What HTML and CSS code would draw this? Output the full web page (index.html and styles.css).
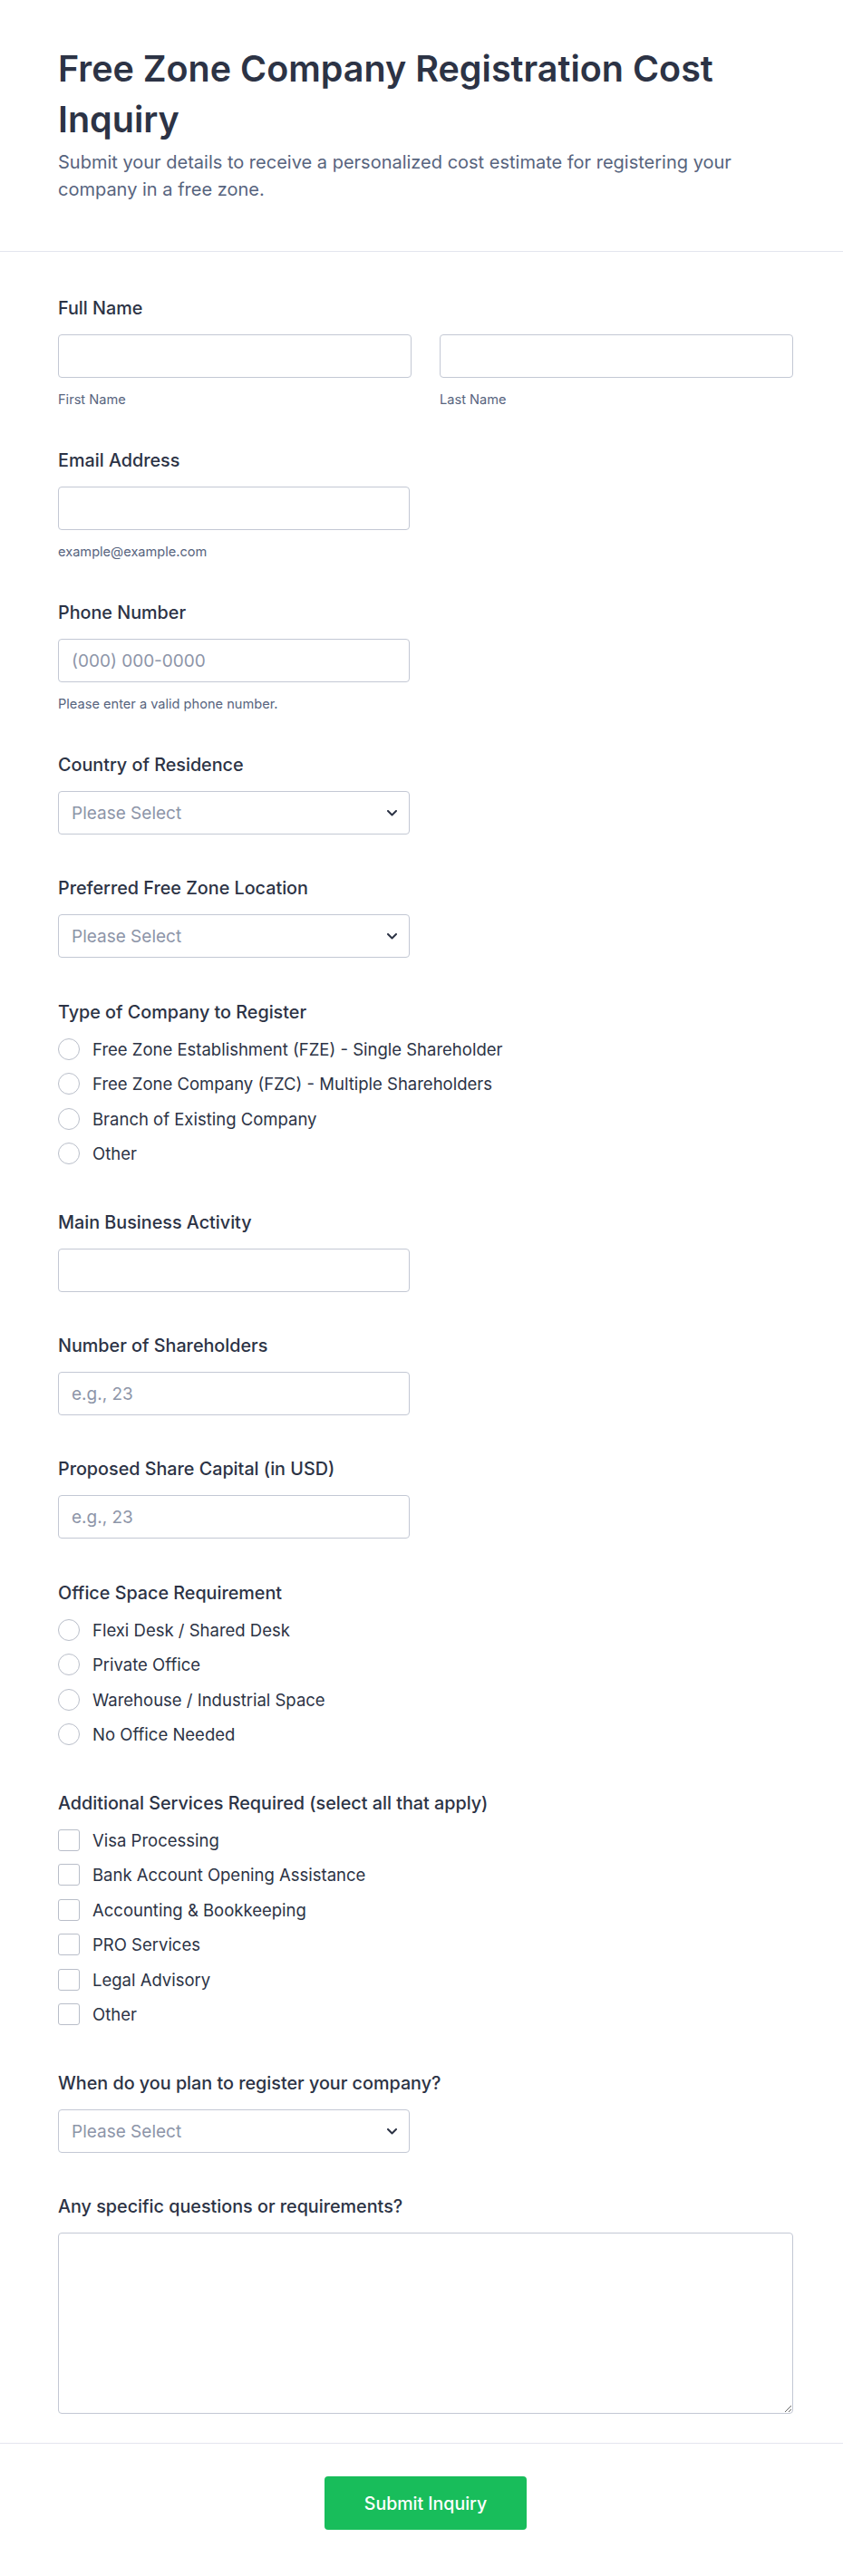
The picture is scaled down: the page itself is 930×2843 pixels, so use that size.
FILE: index.html
```html
<!DOCTYPE html>
<html lang="en">
<head>
<meta charset="utf-8">
<title>Free Zone Company Registration Cost Inquiry</title>
<link rel="stylesheet" href="styles.css">
</head>
<body>
<div class="page">
  <header class="header">
    <h1 class="title">Free Zone Company Registration Cost Inquiry</h1>
    <p class="subtitle">Submit your details to receive a personalized cost estimate for registering your company in a free zone.</p>
  </header>

  <form class="form-body">
    <div class="field">
      <div class="label">Full Name</div>
      <div class="name-row">
        <div class="name-col">
          <input class="input input-full" type="text">
          <div class="sub">First Name</div>
        </div>
        <div class="name-col">
          <input class="input input-full" type="text">
          <div class="sub">Last Name</div>
        </div>
      </div>
    </div>

    <div class="field">
      <div class="label">Email Address</div>
      <input class="input" type="text">
      <div class="sub">example@example.com</div>
    </div>

    <div class="field">
      <div class="label">Phone Number</div>
      <input class="input" type="text" placeholder="(000) 000-0000">
      <div class="sub">Please enter a valid phone number.</div>
    </div>

    <div class="field field-plain">
      <div class="label">Country of Residence</div>
      <div class="select"><span class="select-text">Please Select</span><svg class="chevron" width="11" height="7" viewBox="0 0 11 7"><path d="M1 1l4.5 4.5L10 1" fill="none" stroke="#2c3345" stroke-width="2" stroke-linecap="round" stroke-linejoin="round"/></svg></div>
    </div>

    <div class="field field-plain">
      <div class="label">Preferred Free Zone Location</div>
      <div class="select"><span class="select-text">Please Select</span><svg class="chevron" width="11" height="7" viewBox="0 0 11 7"><path d="M1 1l4.5 4.5L10 1" fill="none" stroke="#2c3345" stroke-width="2" stroke-linecap="round" stroke-linejoin="round"/></svg></div>
    </div>

    <div class="field field-options">
      <div class="label">Type of Company to Register</div>
      <div class="options">
        <div class="option"><span class="radio"></span><span>Free Zone Establishment (FZE) - Single Shareholder</span></div>
        <div class="option"><span class="radio"></span><span>Free Zone Company (FZC) - Multiple Shareholders</span></div>
        <div class="option"><span class="radio"></span><span>Branch of Existing Company</span></div>
        <div class="option"><span class="radio"></span><span>Other</span></div>
      </div>
    </div>

    <div class="field field-plain">
      <div class="label">Main Business Activity</div>
      <input class="input" type="text">
    </div>

    <div class="field field-plain">
      <div class="label">Number of Shareholders</div>
      <input class="input" type="text" placeholder="e.g., 23">
    </div>

    <div class="field field-plain">
      <div class="label">Proposed Share Capital (in USD)</div>
      <input class="input" type="text" placeholder="e.g., 23">
    </div>

    <div class="field field-options">
      <div class="label">Office Space Requirement</div>
      <div class="options">
        <div class="option"><span class="radio"></span><span>Flexi Desk / Shared Desk</span></div>
        <div class="option"><span class="radio"></span><span>Private Office</span></div>
        <div class="option"><span class="radio"></span><span>Warehouse / Industrial Space</span></div>
        <div class="option"><span class="radio"></span><span>No Office Needed</span></div>
      </div>
    </div>

    <div class="field field-options">
      <div class="label">Additional Services Required (select all that apply)</div>
      <div class="options">
        <div class="option"><span class="checkbox"></span><span>Visa Processing</span></div>
        <div class="option"><span class="checkbox"></span><span>Bank Account Opening Assistance</span></div>
        <div class="option"><span class="checkbox"></span><span>Accounting &amp; Bookkeeping</span></div>
        <div class="option"><span class="checkbox"></span><span>PRO Services</span></div>
        <div class="option"><span class="checkbox"></span><span>Legal Advisory</span></div>
        <div class="option"><span class="checkbox"></span><span>Other</span></div>
      </div>
    </div>

    <div class="field field-plain">
      <div class="label">When do you plan to register your company?</div>
      <div class="select"><span class="select-text">Please Select</span><svg class="chevron" width="11" height="7" viewBox="0 0 11 7"><path d="M1 1l4.5 4.5L10 1" fill="none" stroke="#2c3345" stroke-width="2" stroke-linecap="round" stroke-linejoin="round"/></svg></div>
    </div>

    <div class="field">
      <div class="label">Any specific questions or requirements?</div>
      <textarea class="textarea"></textarea>
    </div>
  </form>

  <footer class="footer">
    <button class="submit" type="button">Submit Inquiry</button>
  </footer>
</div>
</body>
</html>
```
FILE: styles.css
```css
* { box-sizing: border-box; }

html, body {
  margin: 0;
  padding: 0;
  background: #ffffff;
}

body {
  font-family: Inter, "Noto Sans", "Liberation Sans", sans-serif;
  color: #2c3345;
}

.page {
  width: 930px;
}

.header {
  padding: 48px 55px 53px 64px;
  border-bottom: 1px solid #e3e5ee;
}

.title {
  margin: 0;
  font-size: 39.5px;
  font-weight: 600;
  line-height: 56px;
  color: #2c3345;
}

.subtitle {
  margin: 4px 0 0;
  font-size: 20px;
  line-height: 30px;
  color: #57647e;
}

.form-body {
  padding: 48px 55px 32px 64px;
  display: flex;
  flex-direction: column;
  gap: 43px;
}

.field {
  display: flex;
  flex-direction: column;
  align-items: flex-start;
}

.field-plain { padding-bottom: 2.25px; }
.field-options { padding-bottom: 6.75px; }

.label {
  font-size: 19.75px;
  font-weight: 500;
  line-height: 28px;
  margin-bottom: 15px;
  color: #2c3345;
}

.name-row {
  display: grid;
  grid-template-columns: 390px 390px;
  column-gap: 31px;
  width: 811px;
}

.name-col {
  display: flex;
  flex-direction: column;
}

.input {
  display: block;
  width: 388px;
  height: 48px;
  margin: 0;
  padding: 0 14px;
  border: 1px solid #c3c8d4;
  border-radius: 4px;
  background: #ffffff;
  font-family: Inter, "Noto Sans", sans-serif;
  font-size: 19px;
  color: #2c3345;
  outline: none;
}

.input-full { width: 390px; }

.input::placeholder {
  color: #8d95a8;
  opacity: 1;
}

.sub {
  margin-top: 14px;
  font-size: 14.6px;
  line-height: 20px;
  color: #57647e;
}

.select {
  width: 388px;
  height: 48px;
  padding: 0 13px 0 14px;
  border: 1px solid #c3c8d4;
  border-radius: 4px;
  background: #ffffff;
  display: flex;
  align-items: center;
  justify-content: space-between;
}

.select-text {
  font-size: 19px;
  color: #8d95a8;
}

.chevron { flex: none; display: block; }

.options {
  display: flex;
  flex-direction: column;
  gap: 14.5px;
}

.option {
  display: flex;
  align-items: center;
  gap: 14px;
  height: 24px;
  font-size: 18.5px;
  line-height: 24px;
  color: #2c3345;
}

.radio {
  flex: none;
  width: 24px;
  height: 24px;
  border: 1px solid #b9bec9;
  border-radius: 50%;
  background: #ffffff;
}

.checkbox {
  flex: none;
  width: 24px;
  height: 24px;
  border: 1px solid #b9bec9;
  border-radius: 3px;
  background: #ffffff;
}

.textarea {
  display: block;
  width: 811px;
  height: 200px;
  margin: 0;
  padding: 10px 14px;
  border: 1px solid #c3c8d4;
  border-radius: 4px;
  resize: vertical;
  font-family: Inter, "Noto Sans", sans-serif;
  font-size: 19px;
  color: #2c3345;
  outline: none;
}

.footer {
  border-top: 1px solid #e3e5ee;
  padding: 36px 55px 50px 64px;
  display: flex;
  justify-content: center;
}

.submit {
  width: 223px;
  height: 59px;
  border: none;
  border-radius: 4px;
  background: #18bd5b;
  color: #ffffff;
  font-family: Inter, "Noto Sans", sans-serif;
  font-size: 19.5px;
  font-weight: 500;
  cursor: pointer;
}
```
